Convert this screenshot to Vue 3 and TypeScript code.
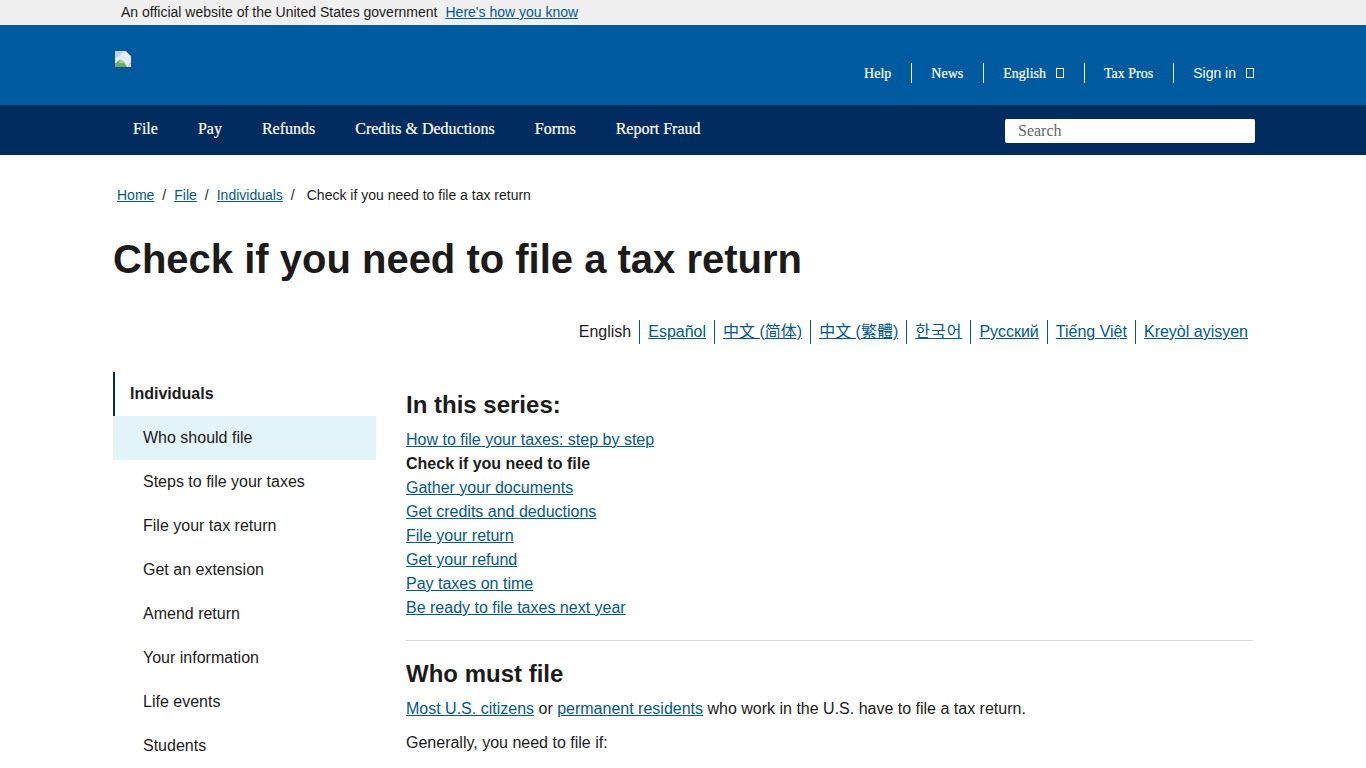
<script setup lang="ts">
const mainNav: string[] = ['File', 'Pay', 'Refunds', 'Credits & Deductions', 'Forms', 'Report Fraud']
const languages: { text: string; cls?: string }[] = [
  { text: 'Español' },
  { text: '中文 (简体)' },
  { text: '中文 (繁體)' },
  { text: '한국어', cls: 'ko' },
  { text: 'Русский' },
  { text: 'Tiếng Việt' },
  { text: 'Kreyòl ayisyen' }
]
const sideItems: string[] = ['Who should file', 'Steps to file your taxes', 'File your tax return', 'Get an extension', 'Amend return', 'Your information', 'Life events', 'Students']
const series: { text: string; current?: boolean }[] = [
  { text: 'How to file your taxes: step by step' },
  { text: 'Check if you need to file', current: true },
  { text: 'Gather your documents' },
  { text: 'Get credits and deductions' },
  { text: 'File your return' },
  { text: 'Get your refund' },
  { text: 'Pay taxes on time' },
  { text: 'Be ready to file taxes next year' }
]
</script>

<template>
  <div class="page">
    <div class="banner">
      <span>An official website of the United States government</span>
      <a href="#">Here's how you know</a>
    </div>

    <header class="top">
      <div class="top-inner">
        <svg class="broken" width="16" height="16" viewBox="0 0 16 16" aria-hidden="true">
          <path d="M0 0H10.5L16 5.5V12L13 16H0Z" fill="#e4ebfa" />
          <path d="M0 0H8L5 5L0 7Z" fill="#c3d2f2" />
          <path d="M10.5 0V5.5H16Z" fill="#fff" />
          <path d="M0 16V12.5L5 8.5L9 10.5L12 16Z" fill="#6fae4e" />
          <path d="M5 8.5L9 10.5L10 12.5L4 12Z" fill="#a5d28a" />
          <path d="M13 16L16 12V16Z" fill="#cfd8e6" />
        </svg>
        <nav class="util">
          <a href="#" class="serif">Help</a>
          <a href="#" class="serif">News</a>
          <a href="#" class="serif">English<i class="tofu"></i></a>
          <a href="#" class="serif">Tax Pros</a>
          <a href="#" class="sans">Sign in<i class="tofu"></i></a>
        </nav>
      </div>
    </header>

    <nav class="main-nav">
      <div class="main-inner">
        <div class="main-links">
          <a v-for="item in mainNav" :key="item" href="#">{{ item }}</a>
        </div>
        <div class="search">Search</div>
      </div>
    </nav>

    <main class="content">
      <div class="crumbs">
        <a href="#">Home</a><span class="sep">/</span>
        <a href="#">File</a><span class="sep">/</span>
        <a href="#">Individuals</a><span class="sep last">/</span>
        <span>Check if you need to file a tax return</span>
      </div>

      <h1>Check if you need to file a tax return</h1>

      <div class="langs">
        <span class="lang">English</span>
        <a v-for="l in languages" :key="l.text" href="#" class="lang" :class="l.cls">{{ l.text }}</a>
      </div>

      <div class="columns">
        <aside class="side">
          <div class="side-head">Individuals</div>
          <a
            v-for="(item, i) in sideItems"
            :key="item"
            href="#"
            class="side-item"
            :class="{ active: i === 0 }"
          >{{ item }}</a>
        </aside>

        <article class="body">
          <h2 class="series-head">In this series:</h2>
          <ul class="series">
            <li v-for="s in series" :key="s.text">
              <strong v-if="s.current">{{ s.text }}</strong>
              <a v-else href="#">{{ s.text }}</a>
            </li>
          </ul>
          <hr />
          <h2 class="must">Who must file</h2>
          <p class="first"><a href="#">Most U.S. citizens</a> or <a href="#">permanent residents</a> who work in the U.S. have to file a tax return.</p>
          <p>Generally, you need to file if:</p>
        </article>
      </div>
    </main>
  </div>
</template>

<style>
html, body { margin: 0; overflow: hidden; background: #fff; }
</style>

<style scoped>
.page {
  height: 768px;
  overflow: hidden;
  font-family: "Liberation Sans", Arial, sans-serif;
  color: #1b1b1b;
  font-size: 16px;
}
a { color: #005a8c; text-decoration: underline; }

.banner {
  height: 25px;
  background: #f0f0f0;
  padding-left: 121px;
  font-size: 14px;
  line-height: 25px;
  box-sizing: border-box;
}
.banner a { margin-left: 8px; }

.top { height: 80px; background: #005a9f; }
.top-inner {
  width: 1140px;
  margin-left: 115px;
  height: 80px;
  position: relative;
  display: flex;
  justify-content: flex-end;
}
.broken { position: absolute; left: 0; top: 26px; }
.util {
  display: flex;
  align-items: center;
  margin-top: 38px;
  height: 20px;
}
.util a {
  color: #fff;
  text-decoration: none;
  font-size: 14px;
  line-height: 20px;
  padding: 2px 19.5px 0;
  height: 18px;
  border-left: 1px solid #fff;
  display: flex;
  align-items: center;
  -webkit-text-stroke: 0.2px #fff;
}
.util a:first-child { border-left: 0; }
.util a:last-child { padding-right: 1px; }
.util a.sans { padding-top: 0; height: 20px; -webkit-text-stroke: 0; }
.serif { font-family: "Liberation Serif", "Times New Roman", serif; }
.sans { font-family: "Liberation Sans", Arial, sans-serif; }
.tofu {
  display: inline-block;
  width: 6px;
  height: 8px;
  border: 1px solid #fff;
  margin-left: 10px;
}
.serif .tofu { margin-top: -2px; }

.main-nav { height: 50px; background: #002c5f; }
.main-inner {
  width: 1140px;
  margin-left: 115px;
  height: 50px;
  display: flex;
  align-items: center;
  justify-content: space-between;
}
.main-links { display: flex; padding-left: 18px; gap: 40px; margin-top: -2px; }
.main-links a {
  color: #fff;
  text-decoration: none;
  font-family: "Liberation Serif", "Times New Roman", serif;
  font-size: 16px;
  line-height: 20px;
  -webkit-text-stroke: 0.2px #fff;
}
.search {
  width: 250px;
  height: 24px;
  box-sizing: border-box;
  background: #fff;
  border-radius: 2px;
  padding-left: 13px;
  font-family: "Liberation Serif", "Times New Roman", serif;
  font-size: 16px;
  line-height: 24px;
  color: #666;
  margin-top: 2px;
}

.content { width: 1140px; margin-left: 113px; }
.crumbs {
  padding: 32px 0 0 4px;
  font-size: 14px;
  line-height: 17px;
}
.sep { margin: 0 8px; }
.sep.last { margin-right: 12px; margin-left: 8px; }

h1 {
  margin: 32px 0 0;
  font-size: 40px;
  line-height: 46px;
  font-weight: 700;
  color: #1b1b1b;
}

.langs {
  display: flex;
  justify-content: flex-end;
  margin-top: 38px;
  font-size: 16px;
  line-height: 24px;
  font-family: "Liberation Sans", "Noto Sans CJK SC", "Noto Sans CJK KR", sans-serif;
}
.lang { padding: 0 8px; border-left: 1px solid #005a8c; }
.lang:first-child { border-left: 0; }
.lang:last-child { padding-right: 5px; }
.lang.ko { letter-spacing: 1px; }

.columns { display: flex; margin-top: 28px; }
.side { width: 263px; flex: none; font-size: 16px; }
.side-head {
  height: 44px;
  box-sizing: border-box;
  border-left: 2px solid #002c5f;
  padding-left: 15px;
  font-weight: 700;
  line-height: 44px;
}
.side-item {
  display: block;
  height: 44px;
  line-height: 44px;
  padding-left: 30px;
  color: #1b1b1b;
  text-decoration: none;
}
.side-item.active { background: #e3f4f8; }

.body { margin-left: 30px; width: 847px; }
.series-head {
  margin: 19px 0 0;
  font-size: 24px;
  line-height: 28px;
  font-weight: 700;
}
.series { list-style: none; margin: 9px 0 0; padding: 0; line-height: 24px; }
hr { border: 0; border-top: 1px solid #d9d9d9; margin: 20px 0 0; }
.must {
  margin: 19px 0 0;
  font-size: 24px;
  line-height: 28px;
  font-weight: 700;
}
p { margin: 0; line-height: 24px; }
p.first { margin: 9px 0 10px; }
</style>
